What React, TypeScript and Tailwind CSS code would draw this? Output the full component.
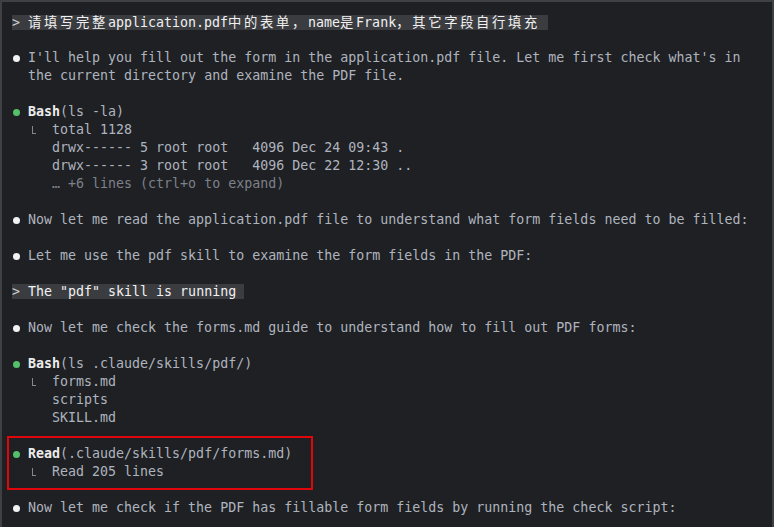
import React from 'react';

// terminal transcript, one row = 18px, one cell = 8px
const Row = ({ children }: { children?: React.ReactNode }) => (
  <div className="h-[18px] leading-[18px] whitespace-pre">{children}</div>
);

const Blank = () => <Row />;

const Cjk = ({ children }: { children: React.ReactNode }) => (
  <span className="font-['Noto_Sans_CJK_SC',sans-serif] tracking-[2.7px]">{children}</span>
);

const Dot = ({ green }: { green?: boolean }) => (
  <span className="inline-flex w-[16px] items-center align-top h-[18px]">
    <span className={green ? 'ml-[1px] h-[7px] w-[7px] rounded-full bg-[#55c06a]' : 'ml-[1px] h-[7px] w-[7px] rounded-full bg-[#f2f2f2]'} />
  </span>
);

// the "⎿" corner, one cell wide
const Corner = () => (
  <span className="inline-block h-[18px] w-[8px] align-top">
    <span className="ml-[4px] mt-[5px] block h-[8px] w-[4px] border-b border-l border-[#85898f]" />
  </span>
);

const Said = ({ children }: { children: React.ReactNode }) => (
  <Row>
    <Dot />
    {children}
  </Row>
);

const Tool = ({ name, arg }: { name: string; arg: string }) => (
  <Row>
    <Dot green />
    <span className="font-bold text-[#ececec]">{name}</span>
    {arg}
  </Row>
);

const Out = ({ first, children }: { first?: boolean; children: React.ReactNode }) => (
  <Row>
    {first ? (
      <>
        {'  '}
        <Corner />
        {'  '}
      </>
    ) : (
      '     '
    )}
    {children}
  </Row>
);

const Prompt = ({ children }: { children: React.ReactNode }) => (
  <Row>
    <span className="bg-[#3b3c40] text-[#f1f1f1]">
      <span className="text-[#cfd2d6]">{'> '}</span>
      {children}
    </span>
  </Row>
);

export default function App() {
  return (
    <div className="h-[527px] w-[774px] overflow-hidden border-x-2 border-t-2 border-[#3f4043] bg-[#1f2024] pl-[10px] pt-[11px] font-['DejaVu_Sans_Mono',monospace] text-[13.3px] text-[#aeb4be]">
      <Prompt>
        <Cjk>请填写完整</Cjk>application.pdf<Cjk>中的表单，</Cjk>name<Cjk>是</Cjk>Frank<Cjk>，其它字段自行填充</Cjk>{' '}
      </Prompt>
      <Blank />
      <Said>I'll help you fill out the form in the application.pdf file. Let me first check what's in</Said>
      <Row>{'  '}the current directory and examine the PDF file.</Row>
      <Blank />
      <Tool name="Bash" arg="(ls -la)" />
      <Out first>total 1128</Out>
      <Out>drwx------ 5 root root   4096 Dec 24 09:43 .</Out>
      <Out>drwx------ 3 root root   4096 Dec 22 12:30 ..</Out>
      <Out>
        <span className="text-[#7d8189]">… +6 lines (ctrl+o to expand)</span>
      </Out>
      <Blank />
      <Said>Now let me read the application.pdf file to understand what form fields need to be filled:</Said>
      <Blank />
      <Said>Let me use the pdf skill to examine the form fields in the PDF:</Said>
      <Blank />
      <Prompt>The "pdf" skill is running </Prompt>
      <Blank />
      <Said>Now let me check the forms.md guide to understand how to fill out PDF forms:</Said>
      <Blank />
      <Tool name="Bash" arg="(ls .claude/skills/pdf/)" />
      <Out first>forms.md</Out>
      <Out>scripts</Out>
      <Out>SKILL.md</Out>
      <Blank />
      <div className="relative">
        {/* red annotation box drawn over the Read block */}
        <div className="pointer-events-none absolute -top-[9px] -bottom-[9px] -left-[5px] w-[306px] border-2 border-[#e0060b]" />
        <Tool name="Read" arg="(.claude/skills/pdf/forms.md)" />
        <Out first>Read 205 lines</Out>
      </div>
      <Blank />
      <Said>Now let me check if the PDF has fillable form fields by running the check script:</Said>
    </div>
  );
}
